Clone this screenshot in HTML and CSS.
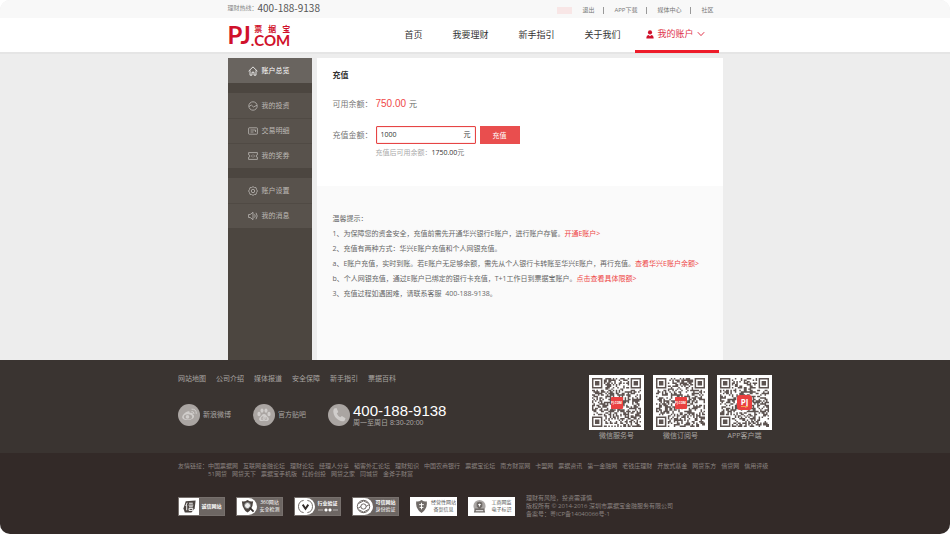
FILE: index.html
```html
<!DOCTYPE html>
<html lang="zh-CN">
<head>
<meta charset="utf-8">
<meta name="viewport" content="width=device-width, initial-scale=1">
<title>充值 - 票据宝</title>
<link rel="stylesheet" href="styles.css">
</head>
<body>
<div class="page">
  <div class="topbar">
    <div class="container topbar-inner">
      <p class="hotline">理财热线：<strong>400-188-9138</strong></p>
      <ul class="top-links">
        <li class="user-mask"></li>
        <li><a href="#">退出</a></li>
        <li><a href="#">APP下载</a></li>
        <li><a href="#">媒体中心</a></li>
        <li><a href="#">社区</a></li>
      </ul>
    </div>
  </div>

  <header class="header">
    <div class="container header-inner">
      <a class="logo" href="#">
        <span class="logo-pj">PJ</span>
        <span class="logo-dot">.</span>
        <span class="logo-side">
          <span class="logo-cn"><span>票</span><span>据</span><span>宝</span></span>
          <span class="logo-com">COM</span>
        </span>
      </a>
      <nav class="nav">
        <a href="#">首页</a>
        <a href="#">我要理财</a>
        <a href="#">新手指引</a>
        <a href="#">关于我们</a>
        <a class="nav-account" href="#">
          <svg class="icon-user" viewBox="0 0 8 9"><circle cx="4" cy="2.4" r="2.1"/><path d="M.4 8.6V7.4Q.4 5.2 2.6 5L4 6.2 5.4 5q2.2.2 2.2 2.4v1.2z"/></svg>
          我的账户
          <svg class="icon-down" viewBox="0 0 8 6"><path d="M.8 1.2 4 4.6 7.200 1.200"/></svg>
        </a>
      </nav>
    </div>
  </header>

  <main class="container main">
    <aside class="sidebar">
      <ul class="menu">
        <li><a class="active" href="#">
          <svg viewBox="0 0 10 10"><path d="M.6 5.200 5 .9l4.400 4.300M2 4.300v4.900h2V6.200h2v3h2V4.300"/></svg>账户总览</a></li>
      </ul>
      <ul class="menu">
        <li><a href="#">
          <svg viewBox="0 0 10 10"><circle cx="5" cy="5" r="4.200"/><path d="M1 5.600 3.300 4l2.200 2L9 4.200"/></svg>我的投资</a></li>
        <li><a href="#">
          <svg viewBox="0 0 10 10"><rect x=".6" y="1.800" width="8.800" height="6.400" rx=".6"/><path d="M2.500 4h5M2.500 6h3M7.500 4v2"/></svg>交易明细</a></li>
        <li><a href="#">
          <svg viewBox="0 0 10 10"><path d="M.6 1.600h8.800v2.200a1.200 1.200 0 0 0 0 2.400v2.200H.6V6.200a1.200 1.200 0 0 0 0-2.400zM3 5h1.300M5.700 5H7M5 3.500v.8M5 5.700v.8"/></svg>我的奖券</a></li>
      </ul>
      <ul class="menu">
        <li><a href="#">
          <svg viewBox="0 0 10 10"><path d="M5 .6 6.300 1.500 8 1.600l.5 1.700.9 1.700-.9 1.700L8 8.400l-1.700.1L5 9.400l-1.300-.9L2 8.400l-.5-1.700L.6 5l.9-1.700L2 1.600l1.700-.1z"/><circle cx="5" cy="5" r="1.700"/></svg>账户设置</a></li>
        <li><a href="#">
          <svg viewBox="0 0 10 10"><path d="M.6 3.500h1.600L5 1.300v7.400L2.200 6.500H.6zM6.600 3.300q1.200 1.700 0 3.400M8 1.800q2.400 3.200 0 6.400"/></svg>我的消息</a></li>
      </ul>
    </aside>

    <div class="content">
      <section class="recharge">
        <h1>充值</h1>
        <p class="row balance"><span class="label">可用余额：</span><strong>750.00</strong> 元</p>
        <form class="row amount">
          <label class="label" for="amount">充值金额：</label>
          <span class="field"><input id="amount" type="text" value="1000"><span>元</span></span>
          <button type="button">充值</button>
        </form>
        <p class="hint">充值后可用余额：<strong>1750.00</strong><span>元</span></p>
      </section>
      <section class="tips">
        <p>温馨提示：</p>
        <p>1、为保障您的资金安全，充值前需先开通华兴银行E账户，进行账户存管。<a href="#">开通E账户&gt;</a></p>
        <p>2、充值有两种方式：华兴E账户充值和个人网银充值。</p>
        <p>a、E账户充值，实时到账。若E账户无足够余额，需先从个人银行卡转账至华兴E账户，再行充值。<a href="#">查看华兴E账户余额&gt;</a></p>
        <p>b、个人网银充值，通过E账户已绑定的银行卡充值，T+1工作日到票据宝账户。<a href="#">点击查看具体限额&gt;</a></p>
        <p>3、充值过程如遇困难，请联系客服&nbsp; 400-188-9138。</p>
      </section>
    </div>
  </main>

  <footer class="footer">
    <div class="footer-top">
      <div class="footer-container footer-cols">
        <div>
          <ul class="footer-nav">
            <li><a href="#">网站地图</a></li>
            <li><a href="#">公司介绍</a></li>
            <li><a href="#">媒体报道</a></li>
            <li><a href="#">安全保障</a></li>
            <li><a href="#">新手指引</a></li>
            <li><a href="#">票据百科</a></li>
          </ul>
          <div class="contacts">
            <a class="contact" href="#">
              <svg viewBox="0 0 22 22"><circle class="disc" cx="11" cy="11" r="11"/><path class="mark" d="M9.500 7.500c1.500-.6 2.500 0 2.200 1.400 2.200-.7 3.500 0 3 1.500 2 .7 1.800 3-.2 4.300-3 2-8 1.800-9.800-.2-1.700-2 1.500-6 4.800-7z"/><ellipse class="disc" cx="10" cy="12.800" rx="4.200" ry="2.600"/><circle class="mark" cx="9.500" cy="12.900" r="1.800"/><path class="line" d="M13.500 7.500q2.500-.2 2.500 2.500M13.500 5.200q5-.4 4.800 4.600"/></svg>新浪微博</a>
            <a class="contact" href="#">
              <svg viewBox="0 0 22 22"><circle class="disc" cx="11" cy="11" r="11"/><g class="mark"><ellipse cx="6" cy="10" rx="1.600" ry="2.200"/><ellipse cx="9" cy="6.600" rx="1.500" ry="2.200"/><ellipse cx="13" cy="6.600" rx="1.500" ry="2.200"/><ellipse cx="16" cy="10" rx="1.600" ry="2.200"/><path d="M11 10c2 0 2.500 2 4 3.300 1.800 1.700.7 4-1.600 3.700q-2.400-.4-4.800 0C6.300 17.300 5.200 15 7 13.300 8.500 12 9 10 11 10z"/></g><path class="cut" d="M9.800 12v3.500H8.500v-2h1.300M12 13.300v2.200h1.600v-2.200"/></svg>官方贴吧</a>
            <div class="contact">
              <svg viewBox="0 0 22 22"><circle class="disc" cx="11" cy="11" r="11"/><path class="mark" d="M6.200 4.500 8.500 4l1.800 4-1.500 1.600q1 2.400 3.400 3.700l1.700-1.300 3.600 2.200-.7 2.300c-2.300 2-6.300.3-8.700-2.400S4.300 6.500 6.200 4.500z"/></svg>
              <div class="phone"><strong>400-188-9138</strong><span>周一至周日 8:30-20:00</span></div>
            </div>
          </div>
        </div>
        <div class="qr-list">
          <figure><svg class="qr" data-seed="17" viewBox="0 0 37 37"></svg><b class="qr-mark">PJ.COM</b><figcaption>微信服务号</figcaption></figure>
          <figure><svg class="qr" data-seed="58" viewBox="0 0 37 37"></svg><b class="qr-mark">PJ.COM</b><figcaption>微信订阅号</figcaption></figure>
          <figure><svg class="qr" data-seed="93" viewBox="0 0 37 37"></svg><b class="qr-mark qr-mark-app">PJ<i></i></b><figcaption>APP客户端</figcaption></figure>
        </div>
      </div>
    </div>

    <div class="footer-bottom">
      <div class="footer-container">
        <div class="friends">
          <span>友情链接：</span>
          <ul>
            <li><a href="#">中国票据网</a></li><li><a href="#">互联网金融论坛</a></li><li><a href="#">理财论坛</a></li><li><a href="#">经理人分享</a></li><li><a href="#">韬客外汇论坛</a></li><li><a href="#">理财知识</a></li><li><a href="#">中国农商银行</a></li><li><a href="#">票据宝论坛</a></li><li><a href="#">南方财富网</a></li><li><a href="#">卡盟网</a></li><li><a href="#">票据资讯</a></li><li><a href="#">第一金融网</a></li><li><a href="#">老钱庄理财</a></li><li><a href="#">开放式基金</a></li><li><a href="#">网贷东方</a></li><li><a href="#">借贷网</a></li><li><a href="#">信用评级</a></li><li><a href="#">51网贷</a></li><li><a href="#">网贷天下</a></li><li><a href="#">票据宝手机版</a></li><li><a href="#">红岭创投</a></li><li><a href="#">网贷之家</a></li><li><a href="#">同城贷</a></li><li><a href="#">金斧子财富</a></li>
          </ul>
        </div>
        <div class="certs">
          <a class="cert" href="#"><span class="cert-icon"><svg viewBox="0 0 16 16"><path class="dark" d="M4 2.500 14.500 1.500 13.500 10 10 14.500H3L1.500 10z"/><path class="light" d="M5.500 4 4 7.500M5 6.500V12M7.500 4.500h4M7 6.500h5M7.500 8.300h4M7.500 10h4v2.200h-4z"/></svg></span><span class="cert-text bold">诚信网站</span></a>
          <a class="cert" href="#"><span class="cert-icon round"><svg viewBox="0 0 16 16"><path class="dark" d="M8 1q3 2 6 1.500 0 8-6 12-6-4-6-12Q5 3 8 1z"/><circle class="glass" cx="8" cy="7" r="3.200"/><path class="handle" d="m10.200 9.200 4.300 4.300"/></svg></span><span class="cert-text">360网站<br>安全检测</span></a>
          <a class="cert" href="#"><span class="cert-icon round"><svg viewBox="0 0 16 16"><path class="stroke" d="M6 1.500a6.600 6.600 0 0 0 0 13M10 1.500a6.600 6.600 0 0 1 0 13"/><path class="handle" d="m5 6 3 4.500L11 6"/></svg></span><span class="cert-text"><b>行业验证</b><svg class="stars" viewBox="0 0 20 4"><path d="M0 2h5M15 2h5"/><circle cx="8" cy="2" r="1.300"/><circle cx="12" cy="2" r="1.300"/></svg></span></a>
          <a class="cert" href="#"><span class="cert-icon round"><svg viewBox="0 0 16 16"><circle class="stroke" cx="8" cy="8" r="6.600"/><circle class="stroke" cx="8" cy="8" r="2.800"/><path class="stroke" d="M2.500 5 8 2l5 2.500M13.500 11 8 14l-5-2.500M5.300 8 2 10M10.700 8 14 6"/></svg></span><span class="cert-text"><b>可信网站</b><br>身份验证</span></a>
          <a class="cert cert-white" href="#"><span class="cert-icon"><svg viewBox="0 0 16 16"><path class="shield" d="M8 1q3 2 5.500 1.500Q15 10 8 15 1 10 2.500 2.500 5 3 8 1z"/><path class="light" d="M8 4v7M5.500 6h5M6 9h4"/></svg></span><span class="cert-text">经营性网站<br>备案信息</span></a>
          <a class="cert cert-white" href="#"><span class="cert-icon"><svg viewBox="0 0 16 16"><circle class="silver" cx="8" cy="7.500" r="6.500"/><path class="shield" d="M3 10h10l1 4.500H2zM5 4q3-2 6 0v4l-3 3-3-3z"/><path class="light" d="M4 12.500h8M6.500 6h3M8 5v3"/></svg></span><span class="cert-text">工商网监<br>电子标识</span></a>
          <p class="legal">理财有风险，投资需谨慎<br>版权所有 © 2014-2016 深圳市票据宝金融服务有限公司<br>备案号：粤ICP备14040066号-1</p>
        </div>
      </div>
    </div>
  </footer>
</div>
<script src="script.js"></script>
</body>
</html>
```
FILE: styles.css
```css
* {
  box-sizing: border-box;
}

body {
  margin: 0;
  background: #fff;
  color: #666;
  font: 7px/10px "Open Sans", "Noto Sans CJK SC", sans-serif;
}

h1, p, ul, figure {
  margin: 0;
  padding: 0;
}

ul {
  list-style: none;
}

a {
  color: inherit;
  text-decoration: none;
}

svg {
  display: block;
  flex: none;
}

.page {
  display: flex;
  flex-direction: column;
  min-height: calc(100vh - 1px);
  overflow: hidden;
  border-radius: 10px;
  background: #ededed;
}

.container {
  width: 100%;
  max-width: 495px;
  margin: 0 auto;
}

/* Top bar */
.topbar {
  background: #f8f8f8;
}

.topbar-inner {
  display: flex;
  align-items: center;
  justify-content: space-between;
  height: 18px;
}

.hotline {
  display: flex;
  align-items: center;
  padding-bottom: 2px;
  color: #888;
  font-size: 6px;
}

.hotline strong {
  color: #555;
  font: 10px/16px "Noto Sans CJK SC", sans-serif;
}

.top-links {
  display: flex;
  align-items: center;
  padding-top: 2px;
  font-size: 6px;
  line-height: 7px;
  color: #777;
}

.top-links li {
  padding: 0 9px 0 10px;
}

.top-links li + li + li {
  border-left: 1px solid #999;
}

.top-links .user-mask {
  width: 15px;
  height: 7px;
  padding: 0;
  background: #f8e6e6;
}

/* Header */
.header {
  border-bottom: 2px solid #e5e5e5;
  background: #fff;
}

.header-inner {
  display: flex;
  justify-content: space-between;
  height: 34px;
}

.logo {
  display: flex;
  align-items: center;
  color: #d0112b;
  font-family: Lato, "Noto Sans CJK SC", sans-serif;
  font-weight: 700;
}

.logo-pj {
  font-size: 24px;
  line-height: 30px;
}

.logo-dot {
  align-self: flex-end;
  font-size: 15px;
  line-height: 24px;
}

.logo-cn {
  display: flex;
  justify-content: space-between;
  font: 700 8px/10px "Noto Sans CJK SC", sans-serif;
}

.logo-com {
  display: block;
  font-size: 15px;
  line-height: 12px;
}

.nav {
  display: flex;
  margin-right: 4px;
  color: #333;
  font-size: 9px;
  line-height: 34px;
}

.nav a {
  padding: 0 15px;
}

.nav .nav-account {
  display: flex;
  align-items: center;
  gap: 3px;
  height: 35px;
  padding: 0 14px 0 11px;
  border-bottom: 3px solid #ee1c2a;
  color: #e0344a;
}

.icon-user {
  width: 8px;
  height: 9px;
  fill: #d0112b;
}

.icon-down {
  width: 8px;
  height: 6px;
  fill: none;
  stroke: #e0344a;
}

/* Main area */
.main {
  display: flex;
  flex: 1;
  gap: 5px;
  padding-top: 4px;
}

.sidebar {
  width: 84px;
  background: #4c4640;
}

.menu {
  margin-bottom: 10px;
}

.menu a {
  display: flex;
  align-items: center;
  gap: 4px;
  height: 25px;
  padding-left: 20px;
  background: #58524c;
  color: #bdb9b5;
}

.menu li + li a {
  border-top: 1px solid #504a44;
}

.menu a.active {
  background: #69645f;
  color: #fff;
}

.menu svg {
  width: 10px;
  height: 10px;
  fill: none;
  stroke: currentColor;
  stroke-width: .8;
}

.content {
  flex: 1;
  min-width: 0;
  background: #fafafa;
}

.recharge {
  padding: 10px 16px 28px;
  background: #fff;
  font-size: 8px;
}

.recharge h1 {
  color: #333;
  font-size: 8px;
  line-height: 14px;
}

.row {
  display: flex;
  align-items: center;
  height: 18px;
}

.label {
  width: 43px;
  color: #777;
}

.balance {
  margin-top: 13px;
}

.balance strong {
  margin-right: 3px;
  color: #f04848;
  font: 10px/14px "Liberation Sans", sans-serif;
}

.amount {
  margin-top: 13px;
}

.field {
  display: flex;
  align-items: center;
  width: 100px;
  height: 18px;
  margin-right: 4px;
  padding: 0 4px;
  border: 1px solid #e64545;
  border-radius: 1px;
  box-shadow: inset 0 0 1px #e64545;
  color: #333;
  font-size: 7px;
}

.field input {
  flex: 1;
  min-width: 0;
  padding: 0;
  border: 0;
  outline: 0;
  background: none;
  color: #333;
  font: 7px/12px "Open Sans", sans-serif;
}

.amount button {
  width: 40px;
  height: 18px;
  padding: 0;
  border: 0;
  background: #e94e4e;
  color: #fff;
  font: 7px/18px "Noto Sans CJK SC", sans-serif;
}

.hint {
  margin-top: 4px;
  padding-left: 43px;
  color: #aaa;
  font-size: 7px;
}

.hint strong {
  color: #333;
  font-weight: 400;
}

.hint span {
  color: #777;
}

.tips {
  padding: 25px 16px;
  line-height: 15px;
}

.tips a {
  color: #ee4545;
}

/* Footer */
.footer-container {
  width: 100%;
  max-width: 594px;
  margin: 0 auto;
}

.footer-top {
  background: #3a3431;
  color: #a9a5a2;
}

.footer-cols {
  display: flex;
  justify-content: space-between;
  padding: 14px 0 12px;
}

.footer-nav {
  display: flex;
  gap: 10px;
}

.contacts {
  display: flex;
  gap: 22px;
  margin-top: 19px;
}

.contact {
  display: flex;
  align-items: center;
  gap: 3px;
}

.contact svg {
  width: 22px;
  height: 22px;
}

.disc {
  fill: #aaa5a2;
}

.mark {
  fill: #d0cdcb;
}

.line {
  fill: none;
  stroke: #d0cdcb;
}

.cut {
  fill: none;
  stroke: #aaa5a2;
  stroke-width: .7;
}

.phone strong {
  display: block;
  color: #fff;
  font: 15px/15px "Liberation Sans", sans-serif;
}

.phone span {
  display: block;
  font-family: "Liberation Sans", "Noto Sans CJK SC", sans-serif;
  line-height: 9px;
}

.qr-list {
  display: flex;
  gap: 9px;
  padding-top: 1px;
}

.qr-list figure {
  display: grid;
  justify-items: center;
}

.qr {
  grid-area: 1 / 1;
  width: 55px;
  height: 55px;
  background: #fff;
  fill: #5d5350;
}

.qr-mark {
  z-index: 1;
  display: grid;
  grid-area: 1 / 1;
  place-content: center;
  align-self: center;
  width: 12px;
  height: 12px;
  border-radius: 1px;
  background: #e94040;
  color: #fff;
  font-size: 3px;
  line-height: 4px;
}

.qr-mark-app {
  justify-items: center;
  width: 15px;
  height: 15px;
  border-radius: 3px;
  font-size: 8px;
  line-height: 8px;
}

.qr-mark-app i {
  width: 7px;
  height: 1px;
  background: #f5a04a;
}

.qr-list figcaption {
  line-height: 11px;
}

.footer-bottom {
  padding: 9px 0 16px;
  background: #332a28;
  color: #8b8481;
  font-size: 6px;
  line-height: 8px;
}

.friends {
  display: flex;
}

.friends span {
  flex: none;
}

.friends ul {
  display: flex;
  flex-wrap: wrap;
  column-gap: 5px;
}

.certs {
  display: flex;
  align-items: center;
  gap: 11px;
  margin-top: 16px;
}

.cert {
  display: flex;
  flex: none;
  width: 47px;
  height: 19px;
  overflow: hidden;
  border: 1px solid #77706d;
  background: #6d6663;
  color: #fff;
}

.cert-icon {
  display: grid;
  flex: none;
  place-content: center;
  width: 20px;
  background: #fff;
}

.cert-icon.round {
  border-radius: 0 9px 9px 0;
}

.cert-icon svg {
  width: 15px;
  height: 15px;
  fill: none;
}

.cert-text {
  flex: 1;
  align-self: center;
  font-size: 5px;
  line-height: 7px;
  text-align: center;
  white-space: nowrap;
}

.stars {
  width: 20px;
  height: 4px;
  margin: 1px auto;
  fill: #fff;
  stroke: #fff;
  stroke-width: .5;
}

.bold {
  font-weight: 700;
}

.cert-white {
  border-color: #fff;
  background: #fff;
  color: #555;
}

.cert .dark {
  fill: #4b4441;
}

.cert .light {
  stroke: #fff;
}

.cert .glass {
  fill: #eee;
  stroke: #777;
}

.cert .handle {
  stroke: #332d2b;
  stroke-width: 2;
}

.cert .stroke {
  stroke: #68615e;
  stroke-width: 1;
}

.cert .shield {
  fill: #6f6a67;
}

.cert .silver {
  fill: #aaa6a4;
}
```
FILE: script.js
```js
// Draws a 33-module code inside each .qr element, with a quiet zone of two modules.
const SIZE = 33;
const MARGIN = 2;

function finder(x, y) {
  const ring = Math.max(Math.abs(x - 3), Math.abs(y - 3));
  return ring === 3 || ring <= 1;
}

document.querySelectorAll('.qr').forEach((svg) => {
  let state = Number(svg.dataset.seed);
  let d = '';
  for (let y = 0; y < SIZE; y++) {
    for (let x = 0; x < SIZE; x++) {
      state = (state * 1103515 + 12345) % 2147483647;
      let on = (state >> 8) % 100 < 50;
      const right = x > SIZE - 9;
      const bottom = y > SIZE - 9;
      if ((x < 8 || right) && (y < 8 || bottom) && !(right && bottom)) {
        const fx = right ? x - SIZE + 7 : x;
        const fy = bottom ? y - SIZE + 7 : y;
        on = fx >= 0 && fx < 7 && fy >= 0 && fy < 7 && finder(fx, fy);
      }
      if (on) d += `M${x + MARGIN} ${y + MARGIN}h1v1h-1z`;
    }
  }
  const path = document.createElementNS('http://www.w3.org/2000/svg', 'path');
  path.setAttribute('d', d);
  svg.append(path);
});
```
